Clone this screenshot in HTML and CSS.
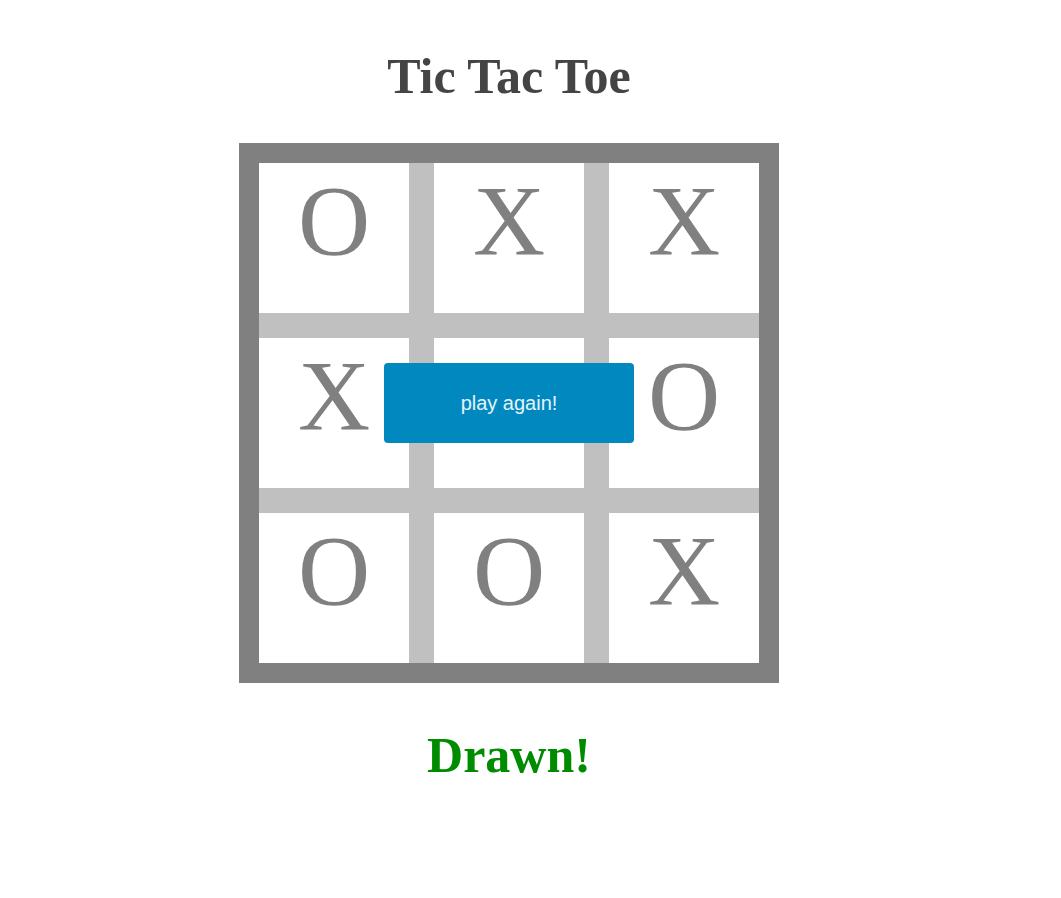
FILE: index.html
```html
<!DOCTYPE html>
<html>
<head>
<meta charset="utf-8">
<link rel="stylesheet" href="styles.css">
</head>
<body>
<main class="game">
  <h1 class="title">Tic Tac Toe</h1>
  <div class="board">
    <div class="cell">O</div>
    <div class="cell">X</div>
    <div class="cell">X</div>
    <div class="cell">X</div>
    <div class="cell"></div>
    <div class="cell">O</div>
    <div class="cell">O</div>
    <div class="cell">O</div>
    <div class="cell">X</div>
    <button class="replay">play again!</button>
  </div>
  <p class="result">Drawn!</p>
</main>
</body>
</html>
```
FILE: styles.css
```css
html, body {
  margin: 0;
  padding: 0;
  background: #ffffff;
}

body {
  font-family: "Liberation Serif", "Times New Roman", serif;
}

.game {
  width: 540px;
  margin-left: 239px;
  padding-top: 47px;
  display: flex;
  flex-direction: column;
  align-items: center;
}

.title {
  margin: 0 0 38px;
  font-size: 50px;
  font-weight: bold;
  color: #444444;
}

.board {
  position: relative;
  box-sizing: border-box;
  width: 540px;
  height: 540px;
  border: 20px solid #808080;
  background: #c0c0c0;
  display: grid;
  grid-template-columns: repeat(3, 150px);
  grid-template-rows: repeat(3, 150px);
  gap: 25px;
}

.cell {
  background: #ffffff;
  color: #808080;
  font-size: 100px;
  text-align: center;
  line-height: normal;
}

.replay {
  position: absolute;
  left: 125px;
  top: 200px;
  width: 250px;
  height: 80px;
  border: none;
  border-radius: 4px;
  background: #0088bf;
  color: #e6f3f9;
  font-family: "Liberation Sans", Arial, sans-serif;
  font-size: 20px;
  padding: 0;
}

.result {
  margin: 43px 0 0;
  font-size: 50px;
  font-weight: bold;
  color: #008c00;
}
```
